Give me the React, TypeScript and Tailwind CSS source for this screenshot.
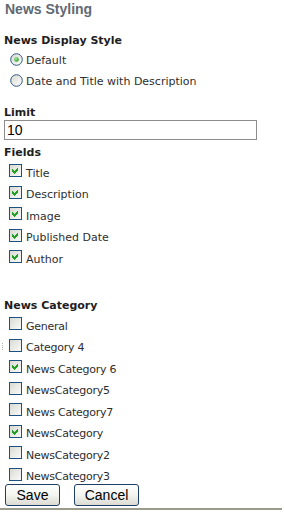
import React from "react";

function CheckBox({ checked }: { checked?: boolean }) {
  return (
    <svg width="13" height="13" viewBox="0 0 13 13" className="shrink-0 block" shapeRendering="crispEdges">
      <defs>
        <linearGradient id="cbg" x1="0" y1="0" x2="1" y2="1">
          <stop offset="0" stopColor="#d8d8d2" />
          <stop offset="1" stopColor="#fbfbfa" />
        </linearGradient>
      </defs>
      <rect x="0.5" y="0.5" width="12" height="12" fill="url(#cbg)" stroke="#1c5180" />
      {checked && (
        <path d="M3 5 L5 7 L9 3 L9 6 L5 10 L3 8 Z" fill="#21a121" />
      )}
    </svg>
  );
}

function Radio({ checked }: { checked?: boolean }) {
  return (
    <svg width="13" height="13" viewBox="0 0 13 13" className="shrink-0 block">
      <defs>
        <linearGradient id="rbg" x1="0" y1="0" x2="1" y2="1">
          <stop offset="0" stopColor="#d6d6d0" />
          <stop offset="1" stopColor="#ffffff" />
        </linearGradient>
        <radialGradient id="rdot" cx="0.4" cy="0.4" r="0.6">
          <stop offset="0" stopColor="#a8f0a0" />
          <stop offset="1" stopColor="#1e9e1e" />
        </radialGradient>
      </defs>
      <circle cx="6.5" cy="6.5" r="5.8" fill="url(#rbg)" stroke="#2c5a84" strokeWidth="1" />
      {checked && <circle cx="6.5" cy="6.5" r="2.3" fill="url(#rdot)" />}
    </svg>
  );
}

function CheckRow({ label, checked, tight }: { label: string; checked?: boolean; tight?: boolean }) {
  return (
    <div className="flex items-center h-[21.5px] pl-[9px]">
      <CheckBox checked={checked} />
      <span
        className={
          "pl-[4px] pt-[5px] leading-[13px] whitespace-nowrap " + (tight ? "tracking-[-0.25px]" : "")
        }
      >
        {label}
      </span>
    </div>
  );
}

function RadioRow({ label, checked }: { label: string; checked?: boolean }) {
  return (
    <div className="flex items-center h-[21px] pl-[10px]">
      <Radio checked={checked} />
      <span className="pl-[3px] pt-[2px] leading-[13px] whitespace-nowrap">{label}</span>
    </div>
  );
}

function Heading({ children, className = "" }: { children: React.ReactNode; className?: string }) {
  return (
    <div className={"h-[14px] leading-[14px] font-bold text-[#1e1e1e] pl-[4px] " + className}>{children}</div>
  );
}

export default function App() {
  const fields = ["Title", "Description", "Image", "Published Date", "Author"];
  const cats: [string, boolean][] = [
    ["General", false],
    ["Category 4", false],
    ["News Category 6", true],
    ["NewsCategory5", false],
    ["News Category7", false],
    ["NewsCategory", true],
    ["NewsCategory2", false],
    ["NewsCategory3", false],
  ];
  return (
    <div className="relative w-[284px] h-[513px] bg-white overflow-hidden font-['DejaVu_Sans',sans-serif] text-[11px] text-[#2e2e2e]">
      <div className="h-[18px] leading-[18px] text-[14px] font-bold text-[#5f6a74] pl-[5px] font-['Liberation_Sans',sans-serif]">
        News Styling
      </div>
      <Heading className="mt-[16px]">News Display Style</Heading>
      <div className="mt-[1px]">
        <RadioRow label="Default" checked />
        <RadioRow label="Date and Title with Description" />
      </div>
      <Heading className="mt-[15px]">Limit</Heading>
      <div className="pl-[4px]">
        <div className="w-[253px] h-[20px] border border-[#8c8c8c] flex items-center pl-[2px] font-['Liberation_Sans',sans-serif] text-[14px] text-black leading-[18px]">
          10
        </div>
      </div>
      <Heading className="mt-[6px]">Fields</Heading>
      <div>
        {fields.map((f) => (
          <CheckRow key={f} label={f} checked />
        ))}
      </div>
      <Heading className="mt-[31.5px]">News Category</Heading>
      <div>
        {cats.map(([c, ch]) => (
          <CheckRow key={c} label={c} checked={ch} tight />
        ))}
      </div>
      <div className="flex gap-[14px] pl-[5px] -mt-[1px]">
        <button className="w-[55px] h-[22px] rounded-[3px] border border-[#1d3f66] bg-gradient-to-b from-white via-[#f4f4f0] to-[#dcdcd4] font-['Liberation_Sans',sans-serif] text-[14px] text-black leading-[20px]">
          Save
        </button>
        <button className="w-[65px] h-[22px] rounded-[3px] border border-[#1d3f66] bg-gradient-to-b from-white via-[#f4f4f0] to-[#dcdcd4] font-['Liberation_Sans',sans-serif] text-[14px] text-black leading-[20px]">
          Cancel
        </button>
      </div>
      <div className="mt-[2px] w-[282px] h-[2px] bg-[#9b9b8c]" />
      <div className="absolute left-[2px] top-[343px] h-[7px] border-l border-dotted border-[#b0b0b0]" />
    </div>
  );
}
